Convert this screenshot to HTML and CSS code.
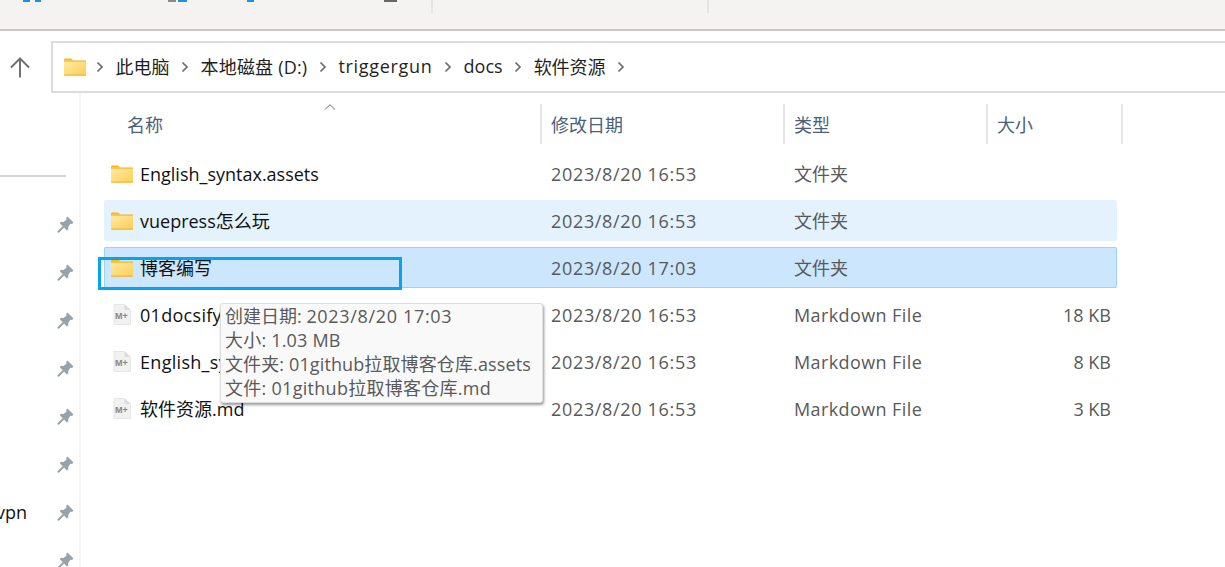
FILE: index.html
```html
<!DOCTYPE html>
<html lang="zh-CN">
<head>
<meta charset="utf-8">
<title>软件资源</title>
<link rel="stylesheet" href="styles.css">
</head>
<body>
<svg class="defs" width="0" height="0" aria-hidden="true">
  <defs>
    <linearGradient id="fg" x1="0" y1="0" x2="1" y2="1">
      <stop offset="0" stop-color="#ffeaa0"/>
      <stop offset="1" stop-color="#fbcf5a"/>
    </linearGradient>
    <symbol id="folder" viewBox="0 0 23 18" preserveAspectRatio="none">
      <path d="M0 2.200C0 1 .6.4 1.600.4h5.200c.6 0 1 .2 1.400.6l1.400 1.400H0z" fill="#fdb900"/>
      <path d="M0 2.600h23v14.200c0 .6-.4 1-1 1H1c-.6 0-1-.4-1-1z" fill="#f5b024"/>
      <path d="M0 3.600h23v13H0z" fill="url(#fg)"/>
    </symbol>
    <symbol id="md" viewBox="0 0 18 21">
      <path d="M1 .5h10.500L17.500 6v14.500H1z" fill="#f1f1f1" stroke="#e6e6e6"/>
      <path d="M11.500.5V6h6z" fill="#dcdcdc"/>
      <text x="2" y="15" class="md-mark">M+</text>
    </symbol>
    <symbol id="pin" viewBox="0 0 17 17">
      <path d="M10.500.6 16.500 6.600 15 8 13.400 7.800 11.200 11 11.400 13.200 10 14.400 2.800 7.200 4 5.800 6.300 6 9.500 3.700 9.200 2z" fill="#98a2a8"/>
      <path d="M6.500 10.800 1 16.200" stroke="#98a2a8" stroke-width="2" fill="none"/>
    </symbol>
    <symbol id="chev" viewBox="0 0 8 12">
      <path d="M1.500 1.500 6 6 1.500 10.500" fill="none" stroke="#6b6b6b" stroke-width="1.700"/>
    </symbol>
  </defs>
</svg>

<header class="toolbar">
  <span class="sliver blue s1"></span>
  <span class="sliver blue s2"></span>
  <span class="sliver grey s3"></span>
  <span class="sliver blue s4"></span>
  <span class="sliver blue s5"></span>
  <span class="sliver dark s6"></span>
  <span class="tool-sep s7"></span>
  <span class="tool-sep s8"></span>
</header>

<div class="addr-row">
  <button class="up-btn" aria-label="向上">
    <svg width="20" height="21" viewBox="0 0 20 21"><path d="M10 20.500V1.500M1 10.500 10 1.500 19 10.500" fill="none" stroke="#727272" stroke-width="2"/></svg>
  </button>
  <nav class="addr-box">
    <svg class="addr-folder" width="22" height="18"><use href="#folder"/></svg>
    <svg class="chev" width="8" height="12"><use href="#chev"/></svg>
    <span class="crumb">此电脑</span>
    <svg class="chev" width="8" height="12"><use href="#chev"/></svg>
    <span class="crumb ls-a">本地磁盘 (D:)</span>
    <svg class="chev" width="8" height="12"><use href="#chev"/></svg>
    <span class="crumb ls-b">triggergun</span>
    <svg class="chev" width="8" height="12"><use href="#chev"/></svg>
    <span class="crumb">docs</span>
    <svg class="chev" width="8" height="12"><use href="#chev"/></svg>
    <span class="crumb">软件资源</span>
    <svg class="chev" width="8" height="12"><use href="#chev"/></svg>
  </nav>
</div>

<div class="main">
  <aside class="sidebar">
    <div class="side-rule"></div>
    <div class="side-row"><span class="side-label"></span><svg width="17" height="17"><use href="#pin"/></svg></div>
    <div class="side-row"><span class="side-label"></span><svg width="17" height="17"><use href="#pin"/></svg></div>
    <div class="side-row"><span class="side-label"></span><svg width="17" height="17"><use href="#pin"/></svg></div>
    <div class="side-row"><span class="side-label"></span><svg width="17" height="17"><use href="#pin"/></svg></div>
    <div class="side-row"><span class="side-label"></span><svg width="17" height="17"><use href="#pin"/></svg></div>
    <div class="side-row"><span class="side-label"></span><svg width="17" height="17"><use href="#pin"/></svg></div>
    <div class="side-row"><span class="side-label">vpn</span><svg width="17" height="17"><use href="#pin"/></svg></div>
    <div class="side-row"><span class="side-label"></span><svg width="17" height="17"><use href="#pin"/></svg></div>
  </aside>

  <section class="list">
    <div class="head">
      <div class="hcell h-name">名称<svg class="sort" width="12" height="6" viewBox="0 0 12 6"><path d="M.8 5.500 6 .8l5.200 4.700" fill="none" stroke="#6f6f6f"/></svg></div>
      <div class="hcell h-date">修改日期</div>
      <div class="hcell h-type">类型</div>
      <div class="hcell h-size">大小</div>
    </div>

    <div class="row">
      <div class="c-name"><svg class="ico" width="22" height="18"><use href="#folder"/></svg>English_syntax.assets</div>
      <div class="c-date">2023/8/20 16:53</div><div class="c-type up">文件夹</div><div class="c-size"></div>
    </div>
    <div class="row hover">
      <div class="c-name"><svg class="ico" width="22" height="18"><use href="#folder"/></svg><span class="up">vuepress怎么玩</span></div>
      <div class="c-date">2023/8/20 16:53</div><div class="c-type up">文件夹</div><div class="c-size"></div>
    </div>
    <div class="row selected">
      <div class="c-name"><svg class="ico" width="22" height="18"><use href="#folder"/></svg><span class="up">博客编写</span></div>
      <div class="c-date">2023/8/20 17:03</div><div class="c-type up">文件夹</div><div class="c-size"></div>
    </div>
    <div class="row">
      <div class="c-name"><svg class="ico ico-md" width="18" height="21"><use href="#md"/></svg><span class="wide">01docsify</span></div>
      <div class="c-date">2023/8/20 16:53</div><div class="c-type md-type">Markdown File</div><div class="c-size">18 KB</div>
    </div>
    <div class="row">
      <div class="c-name"><svg class="ico ico-md" width="18" height="21"><use href="#md"/></svg><span class="wide">English_syntax</span></div>
      <div class="c-date">2023/8/20 16:53</div><div class="c-type md-type">Markdown File</div><div class="c-size">8 KB</div>
    </div>
    <div class="row">
      <div class="c-name"><svg class="ico ico-md" width="18" height="21"><use href="#md"/></svg><span class="up">软件资源.md</span></div>
      <div class="c-date">2023/8/20 16:53</div><div class="c-type md-type">Markdown File</div><div class="c-size">3 KB</div>
    </div>
  </section>
</div>

<div class="highlight"></div>
<div class="tooltip">
  <div>创建日期: <span class="tip-date">2023/8/20 17:03</span></div>
  <div class="tip-size">大小: 1.03 MB</div>
  <div class="tip-dir">文件夹: 01github拉取博客仓库.assets</div>
  <div class="tip-file">文件: 01github拉取博客仓库.md</div>
</div>
</body>
</html>
```
FILE: styles.css
```css
* { box-sizing: border-box; }
html, body { margin: 0; height: 100%; }
body {
  width: 1225px;
  height: 567px;
  overflow: hidden;
  position: relative;
  background: #fff;
  font-family: "Open Sans", "Noto Sans CJK SC", sans-serif;
  font-size: 18px;
  color: #1a1a1a;
}
.defs { position: absolute; }
.md-mark { font: 700 9px "Liberation Sans", sans-serif; fill: #858585; }

.toolbar {
  height: 31px;
  background: #f4f3f2;
  border-bottom: 2px solid #c9c6c5;
  display: flex;
  align-items: flex-start;
}
.sliver { height: 2px; display: block; }
.blue { background: #1f8fe6; }
.grey { background: #8a8a8a; }
.dark { background: #666; }
.s1 { width: 7px; margin-left: 23px; }
.s2 { width: 6px; margin-left: 5px; }
.s3 { width: 8px; margin-left: 127px; }
.s4 { width: 9px; margin-left: 2px; }
.s5 { width: 7px; margin-left: 60px; }
.s6 { width: 13px; margin-left: 130px; }
.tool-sep { width: 2px; height: 13px; background: #e4e3e2; }
.s7 { margin-left: 34px; }
.s8 { margin-left: 274px; }

.addr-row {
  height: 62px;
  padding-top: 10px;
  display: flex;
  align-items: stretch;
}
.up-btn {
  width: 51px;
  padding: 0 0 0 10px;
  border: 0;
  background: none;
  display: flex;
  align-items: center;
}
.addr-box {
  flex: 1;
  height: 52px;
  border: 2px solid #dcdcdc;
  border-right: 0;
  padding-left: 11px;
  display: flex;
  align-items: center;
  gap: 11.5px;
  color: #1f1f1f;
  white-space: nowrap;
}
.addr-folder { margin-right: -1.5px; }
.crumb { padding-bottom: 2px; }
.ls-a { letter-spacing: .2px; }
.ls-b { letter-spacing: .7px; }

.main { display: flex; height: 474px; }
.sidebar {
  width: 81px;
  padding-top: 82px;
  border-right: 2px solid #f5f5f5;
  overflow: hidden;
  flex: none;
}
.side-rule { width: 66px; height: 2px; background: #d6d6d6; }
.side-row {
  height: 48px;
  display: flex;
  align-items: center;
  flex: none;
}
.side-rule + .side-row { margin-top: 23px; }
.side-label {
  width: 57px;
  padding-right: 30px;
  display: flex;
  justify-content: flex-end;
  overflow: hidden;
  color: #111;
  line-height: 24px;
}

.list { flex: 1; padding: 11px 0 0 23px; }
.head { display: flex; height: 40px; color: #4b5f78; position: relative; }
.hcell { height: 40px; display: flex; align-items: center; border-right: 2px solid #e6e6e6; padding-bottom: 1px; }
.h-name { width: 438px; padding-left: 23px; position: relative; }
.h-date { width: 243px; padding-left: 9px; }
.h-type { width: 203px; padding-left: 9px; }
.h-size { width: 135px; padding-left: 9px; }
.sort { position: absolute; left: 220px; top: 0; }

.row {
  width: 1013px;
  height: 41px;
  margin-top: 6px;
  display: flex;
  align-items: center;
  border-radius: 2px;
  color: #595959;
}
.head + .row { margin-top: 9px; }
.hover { background: #e3f2fd; }
.selected { background: #cbe6fd; box-shadow: inset 0 0 0 1px #9fd2fa; }
.c-name { width: 447px; padding-left: 7px; display: flex; align-items: center; color: #111; white-space: nowrap; overflow: hidden; }
.ico { margin-right: 7px; flex: none; }
.ico-md { margin-left: 2px; margin-right: 9px; }
.c-date { width: 243px; letter-spacing: .67px; }
.c-type { width: 203px; }
.md-type { letter-spacing: .4px; }
.c-size { width: 114px; text-align: right; }
.up { padding-bottom: 2px; }
.wide { letter-spacing: .3px; }

.highlight {
  position: absolute;
  left: 98px;
  top: 257px;
  width: 304px;
  height: 33px;
  border: 3px solid #05a5ec;
}
.tooltip {
  position: absolute;
  left: 220px;
  top: 303px;
  width: 323px;
  height: 100px;
  padding: 0 0 0 4px;
  background: #f9f9f9;
  border: 1px solid #dedede;
  border-radius: 3px;
  box-shadow: 1px 2px 3px rgba(0,0,0,.4);
  color: #5a5a5a;
  line-height: 24px;
  white-space: nowrap;
}
.tip-date { letter-spacing: .67px; }
.tip-size { letter-spacing: .2px; }
.tip-dir { letter-spacing: .12px; }
.tip-file { letter-spacing: .28px; }
```
